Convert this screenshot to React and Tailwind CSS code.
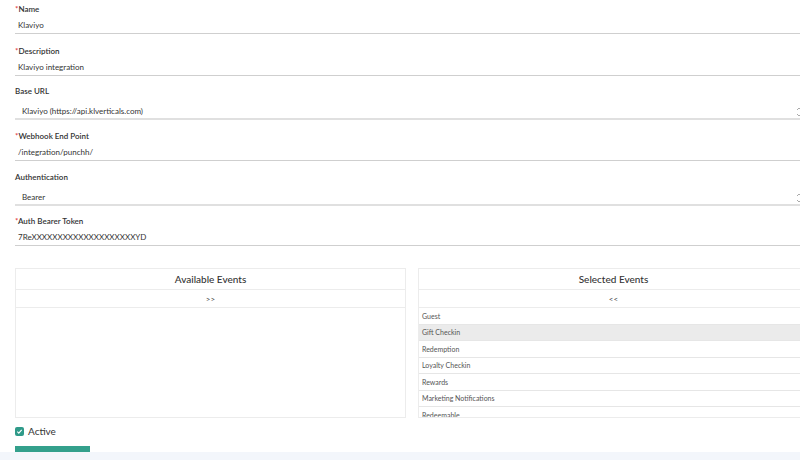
import React from "react";

const font = { fontFamily: "Lato, 'Noto Sans', 'Liberation Sans', sans-serif" };

function Label({ children, req }) {
  return (
    <div className="h-[10px] leading-[10px] text-[8px] font-semibold text-[#333]">
      {req && <span className="text-[#e0393e]">*</span>}
      {children}
    </div>
  );
}

function TextField({ label, value, req, mt, indent = "pl-[3px]" }) {
  return (
    <div className={mt}>
      <Label req={req}>{label}</Label>
      <div className={`h-[20px] box-border border-b border-[#cfcfcf] pt-[6px] ${indent}`}>
        <div className="leading-[10px] text-[8px] text-[#333]">{value}</div>
      </div>
    </div>
  );
}

function SelectField({ label, value, mt }) {
  return (
    <div className={mt}>
      <Label>{label}</Label>
      <div className="mt-[4px] h-[20px] box-border border-b-2 border-[#e0e0e0] pt-[6px] pl-[7px] pr-[4px] flex justify-between">
        <div className="leading-[10px] text-[8px] text-[#333]">{value}</div>
        <svg width="6" height="10" viewBox="0 0 6 10" className="mt-[1px]">
          <path d="M1 3 L3 1 L5 3 M1 7 L3 9 L5 7" stroke="#aaa" strokeWidth="1" fill="none" />
        </svg>
      </div>
    </div>
  );
}

const events = [
  "Guest",
  "Gift Checkin",
  "Redemption",
  "Loyalty Checkin",
  "Rewards",
  "Marketing Notifications",
  "Redeemable",
  "Subscription",
];

function Panel({ title, arrow, items }) {
  return (
    <div className="w-[391px] h-[150px] box-border border border-[#ececec] flex flex-col overflow-hidden">
      <div className="h-[21px] shrink-0 border-b border-[#ececec] flex items-center justify-center text-[10px] font-medium text-[#333]">
        {title}
      </div>
      <div className="h-[18px] shrink-0 border-b border-[#ececec] flex items-center justify-center text-[8px] text-[#444]">
        {arrow}
      </div>
      <div className="flex-1 overflow-hidden">
        {items.map((e, i) => (
          <div
            key={e}
            className={`h-[16.5px] box-border border-b border-[#e6e6e6] flex items-center pl-[3px] text-[7px] text-[#555] ${
              i === 1 ? "bg-[#ebebeb]" : "bg-white"
            }`}
          >
            {e}
          </div>
        ))}
      </div>
    </div>
  );
}

export default function App() {
  return (
    <div className="w-[800px] h-[460px] overflow-hidden bg-white relative" style={font}>
      <div className="w-[806px] pl-[15px] box-border pt-[4px]">
        <TextField label="Name" value="Klaviyo" req />
        <TextField label="Description" value="Klaviyo integration" req mt="mt-[12px]" />
        <SelectField label="Base URL" value="Klaviyo (https://api.klverticals.com)" mt="mt-[10px]" />
        <TextField label="Webhook End Point" value="/integration/punchh/" req mt="mt-[11px]" />
        <SelectField label="Authentication" value="Bearer" mt="mt-[11px]" />
        <TextField label="Auth Bearer Token" value="7ReXXXXXXXXXXXXXXXXXXXXYD" req mt="mt-[10px]" />
      </div>
      <div className="pl-[15px] mt-[22px] flex gap-[12px] w-[830px]">
        <Panel title="Available Events" arrow=">>" items={[]} />
        <Panel title="Selected Events" arrow="<<" items={events} />
      </div>
      <div className="pl-[15px] mt-[8px] flex items-center gap-[4px] h-[10px]">
        <div className="w-[9px] h-[9px] rounded-[2px] bg-[#2f9a89] flex items-center justify-center">
          <svg width="7" height="7" viewBox="0 0 8 8">
            <path d="M1.5 4.2 L3.2 5.8 L6.5 2.2" stroke="white" strokeWidth="1.3" fill="none" />
          </svg>
        </div>
        <span className="text-[10px] text-[#333] leading-[10px]">Active</span>
      </div>
      <div className="ml-[15px] mt-[10px] w-[75px] h-[6px] bg-[#34a08c]" />
      <div className="absolute left-0 right-0 bottom-0 h-[8px] bg-[#f3f6fb]" />
    </div>
  );
}
